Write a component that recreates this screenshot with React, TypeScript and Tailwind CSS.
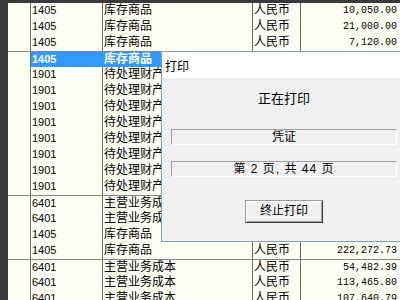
import React from "react";

type Row = {
  code: string;
  name: string;
  cur?: string;
  amt?: string;
  top?: boolean;
  sel?: boolean;
};

const rows: Row[] = [
  { code: "1405", name: "库存商品", cur: "人民币", amt: "10,050.00" },
  { code: "1405", name: "库存商品", cur: "人民币", amt: "21,000.00" },
  { code: "1405", name: "库存商品", cur: "人民币", amt: "7,120.00" },
  { code: "1405", name: "库存商品", top: true, sel: true },
  { code: "1901", name: "待处理财产损溢" },
  { code: "1901", name: "待处理财产损溢" },
  { code: "1901", name: "待处理财产损溢" },
  { code: "1901", name: "待处理财产损溢" },
  { code: "1901", name: "待处理财产损溢" },
  { code: "1901", name: "待处理财产损溢" },
  { code: "1901", name: "待处理财产损溢" },
  { code: "1901", name: "待处理财产损溢" },
  { code: "6401", name: "主营业务成本", top: true },
  { code: "6401", name: "主营业务成本" },
  { code: "1405", name: "库存商品" },
  { code: "1405", name: "库存商品", cur: "人民币", amt: "222,272.73" },
  { code: "6401", name: "主营业务成本", cur: "人民币", amt: "54,482.39", top: true },
  { code: "6401", name: "主营业务成本", cur: "人民币", amt: "113,465.80" },
  { code: "6401", name: "主营业务成本", cur: "人民币", amt: "107,640.79" },
];

const cjk = "font-['Liberation_Sans','Noto_Sans_CJK_SC',sans-serif]";

export default function App() {
  return (
    <div className="relative w-[400px] h-[300px] overflow-hidden bg-[#fefef3] text-black">
      <div className="h-[3px] bg-[#3a3a3a]" />
      <div className="flex">
        <div className="w-[8px] shrink-0 bg-[#3c3c3c] self-stretch" />
        <div className="flex-1 flex flex-col">
          {rows.map((r, i) => (
            <div
              key={i}
              className={`flex h-[16px] shrink-0 ${r.top ? "border-t border-[#7d8791]" : ""}`}
            >
              <div className="w-[23px] shrink-0 border-r border-[#6e6e6e]" />
              <div
                className={`w-[72px] shrink-0 border-r pl-[1px] text-[11px] leading-[15px] font-['Liberation_Sans',sans-serif] ${
                  r.sel
                    ? "bg-[#3399ff] text-white font-bold border-[#3399ff]"
                    : "border-[#6e6e6e]"
                }`}
              >
                {r.code}
              </div>
              <div
                className={`w-[150px] shrink-0 border-r pl-[1px] text-[12px] leading-[15px] whitespace-nowrap overflow-hidden ${cjk} ${
                  r.sel
                    ? "bg-[#3399ff] text-white font-bold border-[#3399ff]"
                    : "border-[#6e6e6e]"
                }`}
              >
                {r.name}
              </div>
              <div
                className={`w-[48px] shrink-0 border-r border-[#6e6e6e] pl-[1px] text-[12px] leading-[15px] ${cjk} ${
                  r.sel ? "bg-[#3399ff]" : ""
                }`}
              >
                {r.cur}
              </div>
              <div
                className={`flex-1 pr-[3px] text-right text-[10px] leading-[15px] font-['Liberation_Mono',monospace] ${
                  r.sel ? "bg-[#3399ff]" : ""
                }`}
              >
                {r.amt}
              </div>
            </div>
          ))}
        </div>
      </div>

      {/* Print dialog */}
      <div className="absolute left-[161px] top-[51px] w-[246px] h-[191px] border border-[#7f9fbf] bg-[#f0f0f0] flex flex-col">
        <div className={`h-[26px] bg-white pl-[3px] text-[12px] leading-[30px] ${cjk}`}>
          打印
        </div>
        <div className="flex-1 flex flex-col items-stretch px-[9px] pt-[13px]">
          <div className={`text-center text-[13px] leading-[16px] ${cjk}`}>正在打印</div>
          <div
            className={`mt-[22px] h-[16px] border-t border-l border-[#a0a0a0] border-b border-r border-b-white border-r-white text-center text-[12px] leading-[14px] ${cjk}`}
          >
            凭证
          </div>
          <div
            className={`mt-[16px] h-[16px] border-t border-l border-[#a0a0a0] border-b border-r border-b-white border-r-white text-center text-[12px] leading-[14px] tracking-[1px] whitespace-pre ${cjk}`}
          >
            第 2 页, 共 44 页
          </div>
          <div className="mt-[23px] flex justify-center">
            <div
              className={`w-[78px] h-[23px] border border-[#9a9a9a] border-b-[#3a3a3a] border-r-[#3a3a3a] bg-[#f0f0f0] shadow-[inset_1px_1px_0_#ffffff,inset_-1px_-1px_0_#a0a0a0] text-center text-[12px] leading-[21px] ${cjk}`}
            >
              终止打印
            </div>
          </div>
        </div>
      </div>
    </div>
  );
}
